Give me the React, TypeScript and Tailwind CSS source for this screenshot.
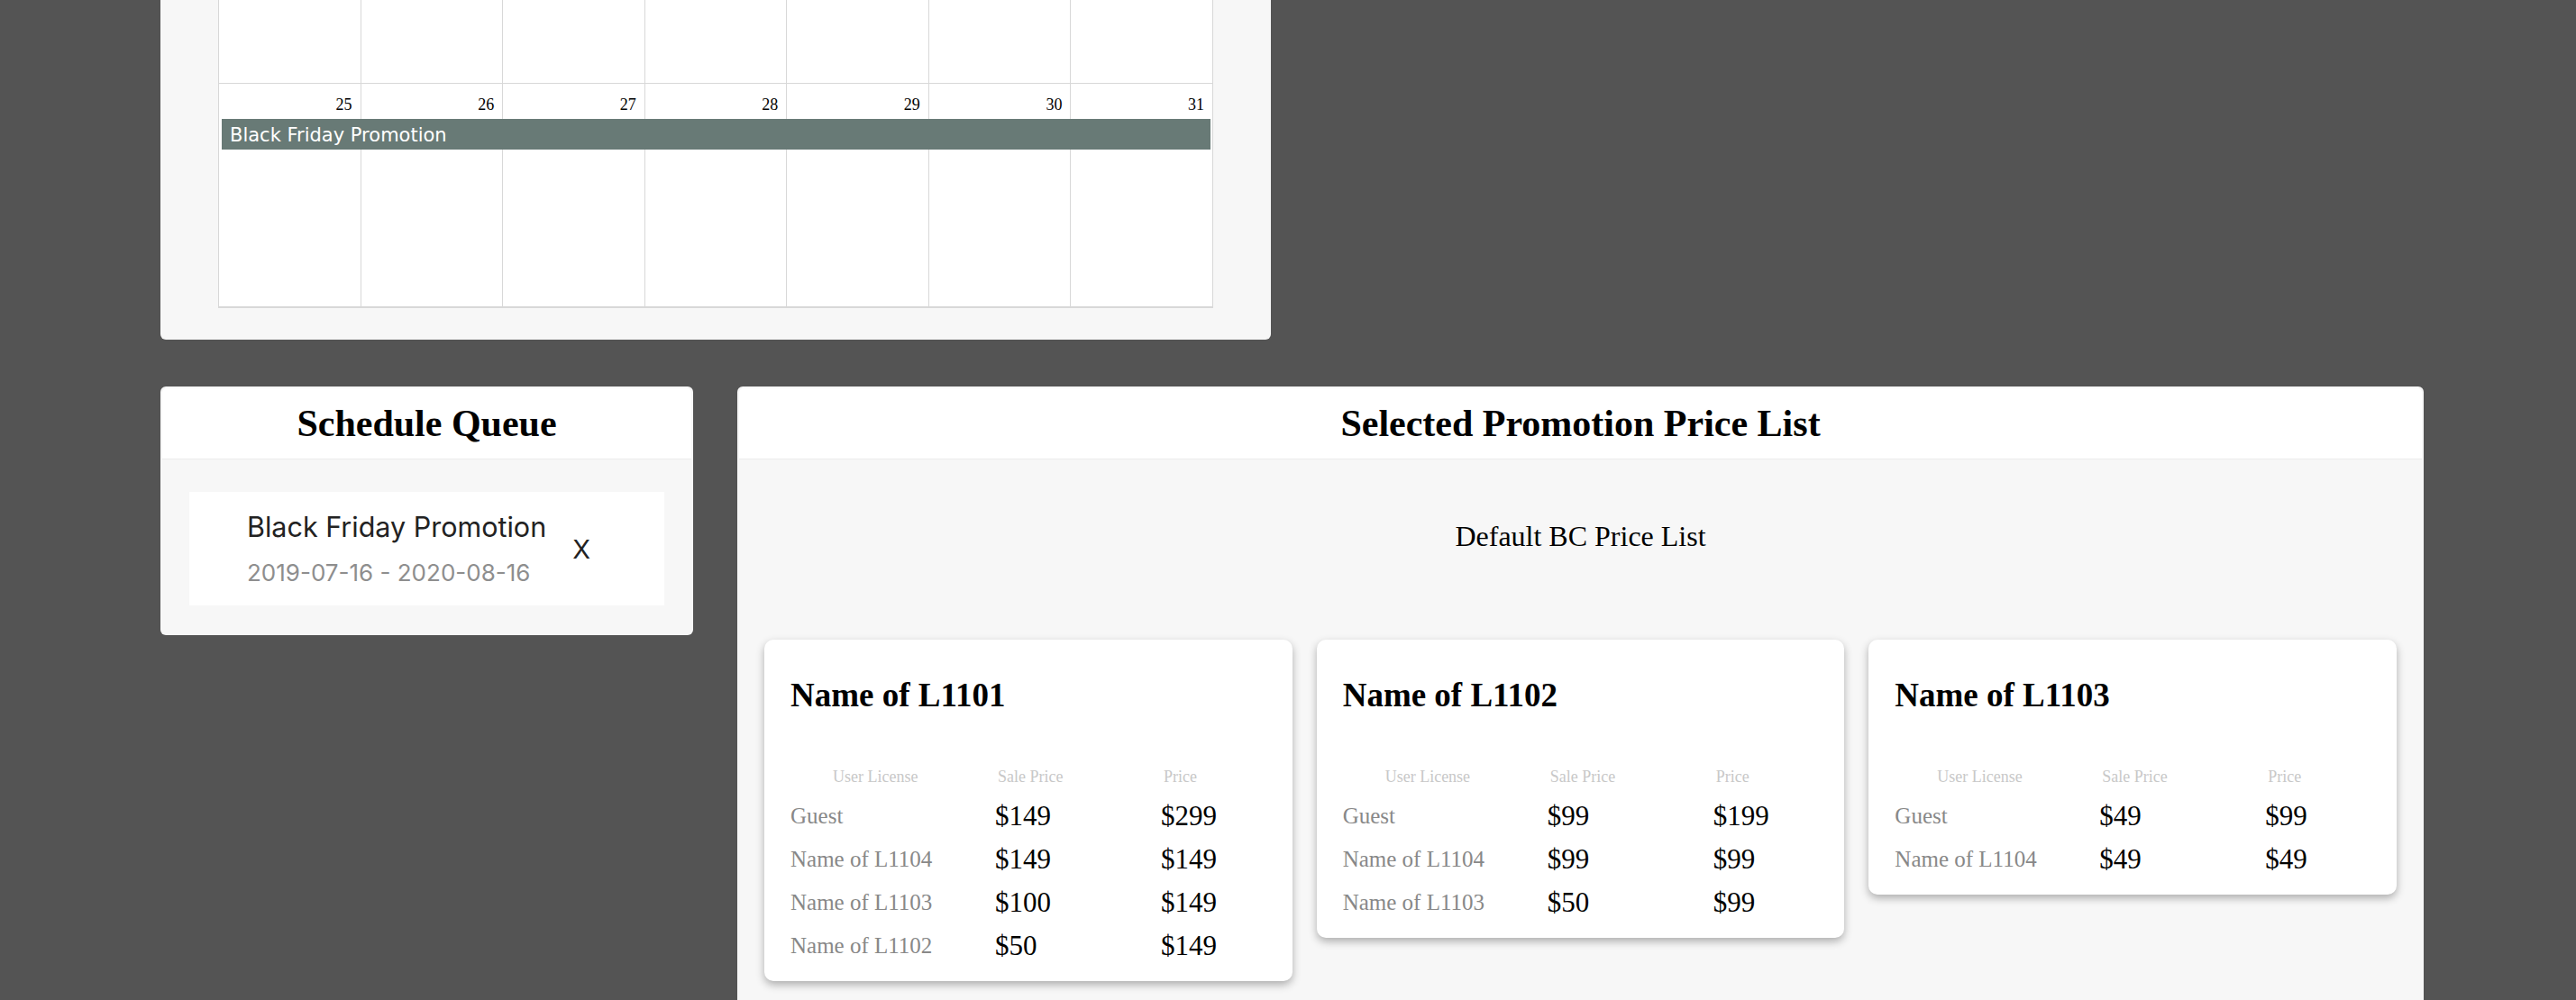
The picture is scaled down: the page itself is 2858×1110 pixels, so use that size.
import React from "react";

const serif = "font-['Liberation_Serif',serif]";

const weekDays = [25, 26, 27, 28, 29, 30, 31];
const colStart = [
  "col-start-1",
  "col-start-2",
  "col-start-3",
  "col-start-4",
  "col-start-5",
  "col-start-6",
  "col-start-7",
];

type Row = { name: string; sale: string; price: string };

const priceCards: { title: string; rows: Row[] }[] = [
  {
    title: "Name of L1101",
    rows: [
      { name: "Guest", sale: "$149", price: "$299" },
      { name: "Name of L1104", sale: "$149", price: "$149" },
      { name: "Name of L1103", sale: "$100", price: "$149" },
      { name: "Name of L1102", sale: "$50", price: "$149" },
    ],
  },
  {
    title: "Name of L1102",
    rows: [
      { name: "Guest", sale: "$99", price: "$199" },
      { name: "Name of L1104", sale: "$99", price: "$99" },
      { name: "Name of L1103", sale: "$50", price: "$99" },
    ],
  },
  {
    title: "Name of L1103",
    rows: [
      { name: "Guest", sale: "$49", price: "$99" },
      { name: "Name of L1104", sale: "$49", price: "$49" },
    ],
  },
];

function Calendar() {
  return (
    <div className="w-[1232px] bg-[#f7f7f7] rounded-b-[6px] px-[64px] pb-[35px]">
      <div className="border-l border-b-2 border-[#d8d8d8] bg-white">
        {/* previous week, mostly scrolled away */}
        <div className="grid grid-cols-7 h-[92px]">
          {weekDays.map((d) => (
            <div key={d} className="border-r border-[#d8d8d8]" />
          ))}
        </div>

        {/* last week of the month */}
        <div className="grid grid-cols-7 grid-rows-[auto_auto_1fr] h-[248px] border-t border-[#d8d8d8]">
          {weekDays.map((d, i) => (
            <div
              key={"bg" + d}
              className={`${colStart[i]} row-start-1 row-span-3 border-r border-[#d8d8d8]`}
            />
          ))}
          {weekDays.map((d, i) => (
            <div
              key={"n" + d}
              className={`${colStart[i]} row-start-1 text-right pr-[10px] pt-[14px] text-[18px] leading-[18px] text-black ${serif}`}
            >
              {d}
            </div>
          ))}
          <div className="col-start-1 col-span-7 row-start-2 mx-[3px] mt-[7px] h-[34px] bg-[#687a76] text-white pl-[9px] pt-[1px] text-[21px] leading-[34px] font-['DejaVu_Sans',sans-serif]">
            Black Friday Promotion
          </div>
        </div>
      </div>
    </div>
  );
}

function CardHeader({ title }: { title: string }) {
  return (
    <div className="mx-[2px] mt-[2px] h-[79px] bg-white rounded-t-[5px] border-b border-[#ececec] flex items-center justify-center">
      <h2 className={`text-[42px] leading-[42px] font-bold text-black ${serif}`}>{title}</h2>
    </div>
  );
}

function ScheduleQueue() {
  return (
    <div className="w-[591px] bg-[#f7f7f7] rounded-[6px]">
      <CardHeader title="Schedule Queue" />
      <div className="pt-[36px] px-[32px] pb-[33px]">
        <div className="h-[126px] bg-white flex items-center pl-[64px] font-['Inter',sans-serif]">
          <div className="pt-[3px]">
            <div className="text-[30.5px] leading-[36px] text-[#222]">Black Friday Promotion</div>
            <div className="mt-[15px] text-[26px] leading-[36px] text-[#8e8e8e]">
              2019-07-16 - 2020-08-16
            </div>
          </div>
          <span className="ml-[29px] text-[29px] leading-none text-[#222]">X</span>
        </div>
      </div>
    </div>
  );
}

function PriceCard({ title, rows }: { title: string; rows: Row[] }) {
  return (
    <div className={`bg-white rounded-[10px] shadow-[0_4px_10px_rgba(0,0,0,0.3)] pt-[43px] px-[29px] pb-[15px] ${serif}`}>
      <h3 className="text-[37px] leading-[37px] font-bold text-black">{title}</h3>
      <div className="mt-[63px] grid grid-cols-[227px_184px_1fr] text-[18px] leading-[18px] text-[#c8c8c8]">
        <div className="pl-[47px]">User License</div>
        <div className="pl-[3px]">Sale Price</div>
        <div className="pl-[3px]">Price</div>
      </div>
      <div className="mt-[11px]">
        {rows.map((r) => (
          <div key={r.name} className="grid grid-cols-[227px_184px_1fr] items-start h-[48px]">
            <div className="text-[25px] leading-[48px] text-[#888]">{r.name}</div>
            <div className="text-[31px] leading-[48px] text-black">{r.sale}</div>
            <div className="text-[31px] leading-[48px] text-black">{r.price}</div>
          </div>
        ))}
      </div>
    </div>
  );
}

function PriceList() {
  return (
    <div className="w-[1871px] bg-[#f7f7f7] rounded-[6px]">
      <CardHeader title="Selected Promotion Price List" />
      <div className="pt-[69px] pb-[40px]">
        <p className={`text-center text-[32px] leading-[32px] text-black ${serif}`}>
          Default BC Price List
        </p>
        <div className="mt-[99px] px-[30px] grid grid-cols-3 gap-[27px] items-start">
          {priceCards.map((c) => (
            <PriceCard key={c.title} title={c.title} rows={c.rows} />
          ))}
        </div>
      </div>
    </div>
  );
}

export default function App() {
  return (
    <div className="min-h-screen bg-[#545454] pl-[178px] pb-[40px]">
      <Calendar />
      <div className="mt-[52px] flex items-start gap-[49px]">
        <ScheduleQueue />
        <PriceList />
      </div>
    </div>
  );
}
